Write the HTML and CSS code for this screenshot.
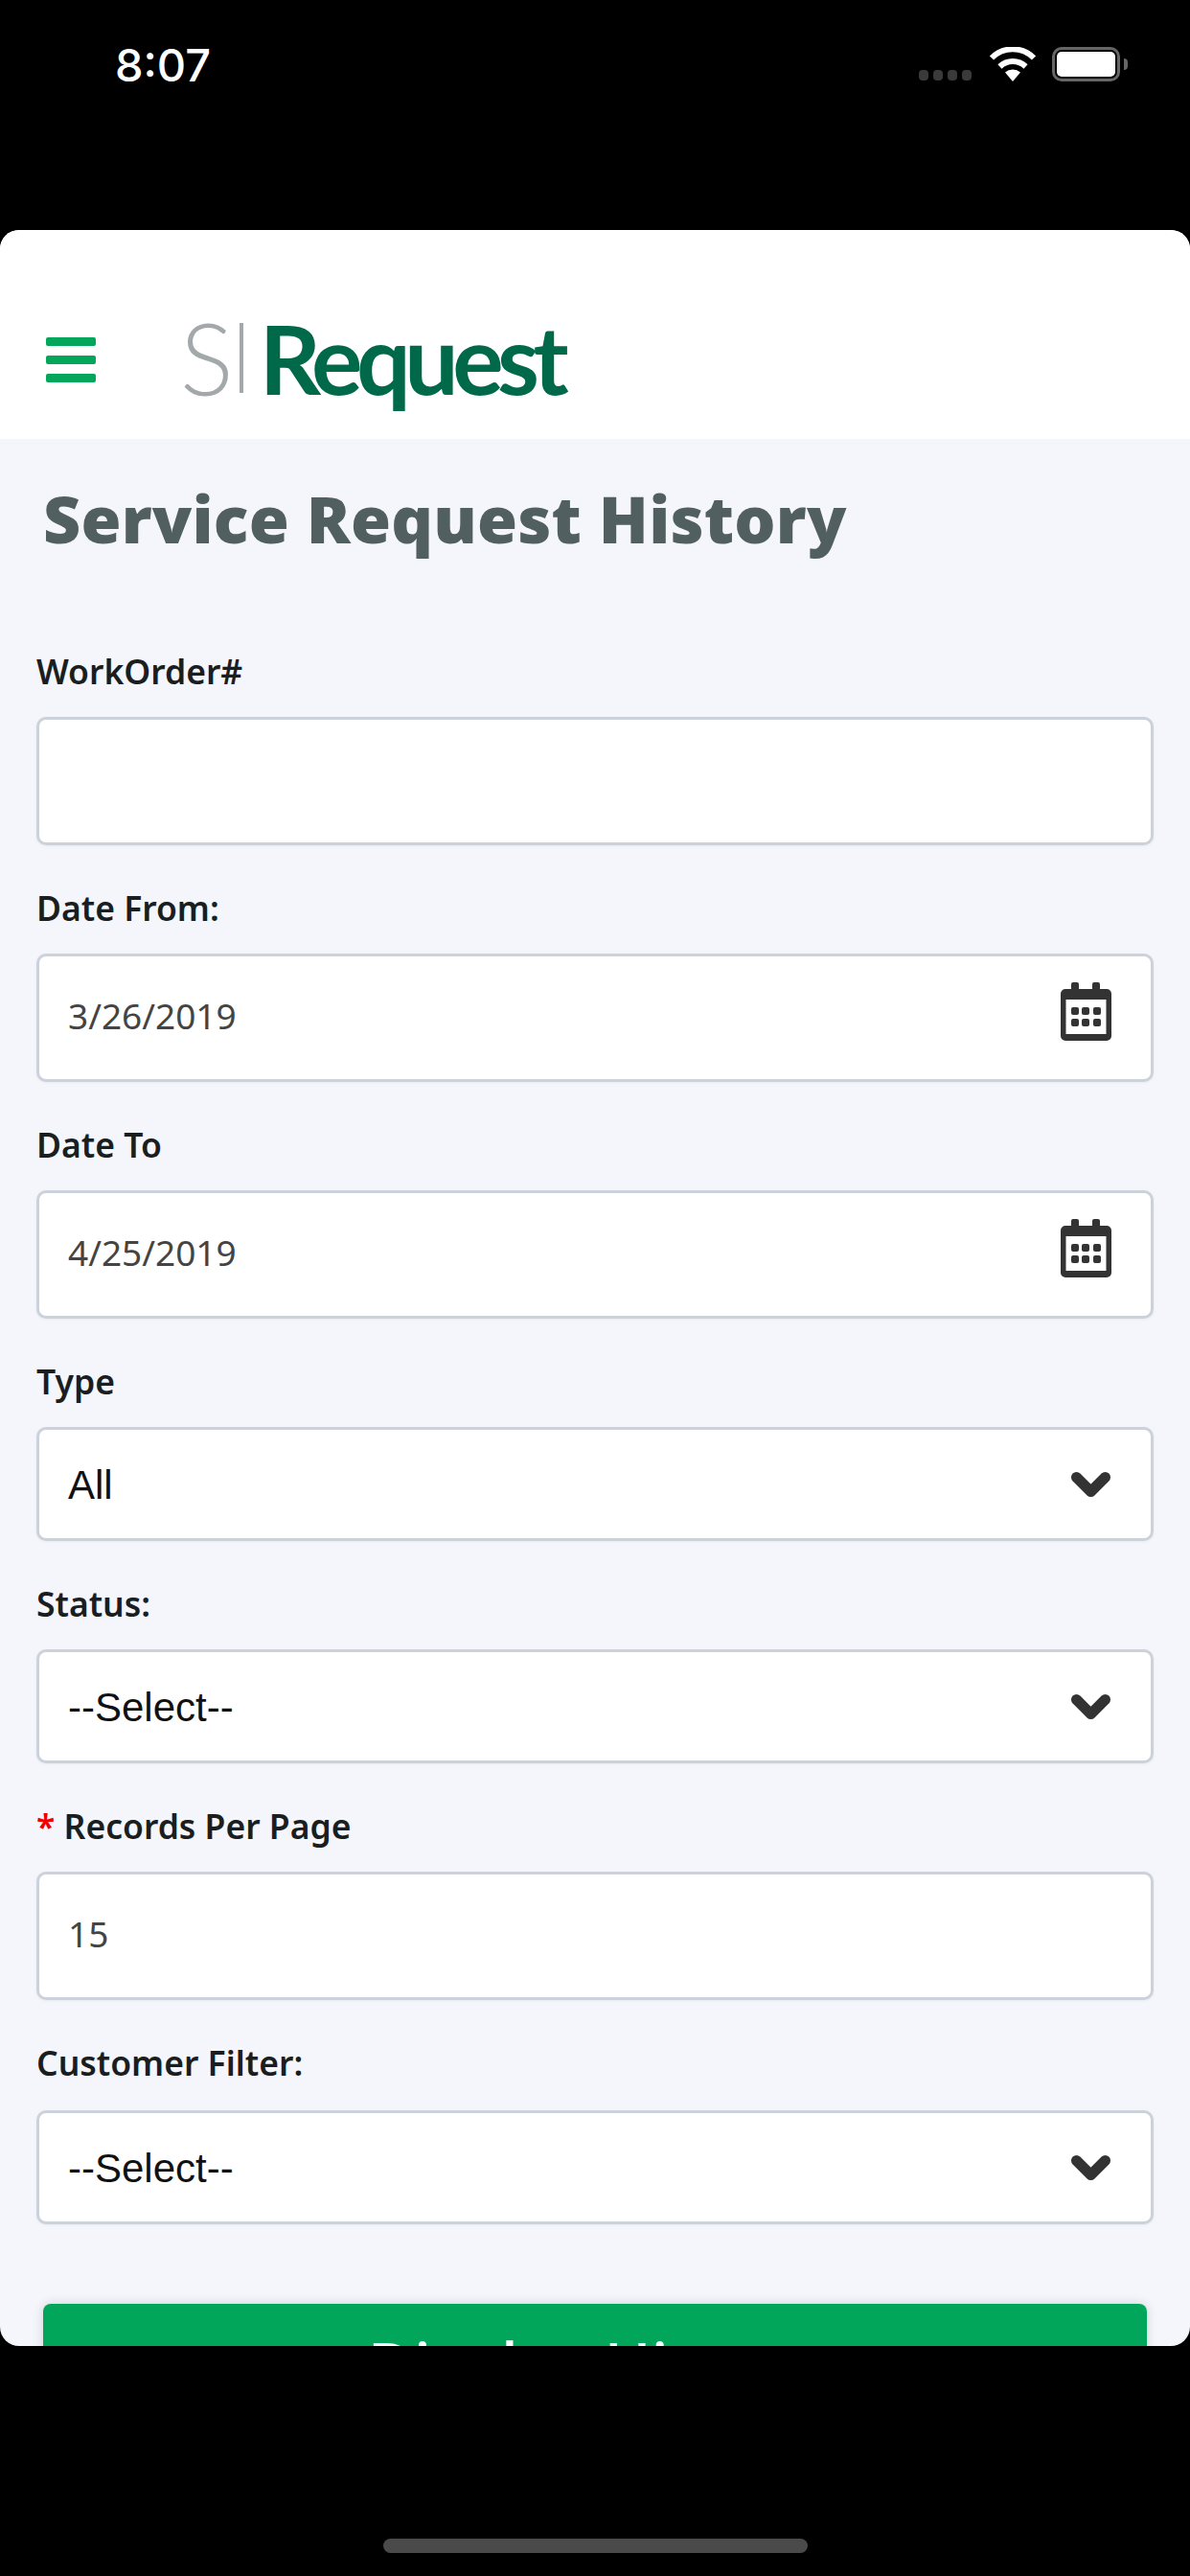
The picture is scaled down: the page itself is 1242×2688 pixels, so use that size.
FILE: index.html
```html
<!DOCTYPE html>
<html lang="en">
<head>
    <meta charset="UTF-8">
    <meta name="viewport" content="width=device-width, initial-scale=1.0">
    <title>Service Request History</title>
    <link rel="stylesheet" href="styles.css">
</head>
<body>
    <!-- Status bar -->
    <div class="status-bar">
        <span class="time">8:07</span>
        <div class="status-icons">
            <div class="signal"><i></i><i></i><i></i><i></i></div>
            <svg class="wifi" width="50" height="36" viewBox="0 0 50 36">
                <path d="M25 36 L17 26.5 A12 12 0 0 1 33 26.5 Z" fill="#fff"/>
                <path d="M11.5 20.5 A19.5 19.5 0 0 1 38.5 20.5" fill="none" stroke="#fff" stroke-width="6"/>
                <path d="M3 11.5 A31 31 0 0 1 47 11.5" fill="none" stroke="#fff" stroke-width="6"/>
            </svg>
            <div class="battery"><div class="battery-fill"></div></div>
            <div class="battery-nub"></div>
        </div>
    </div>

    <div class="webview">
        <div class="top-bar">
            <div class="hamburger"><i></i><i></i><i></i></div>
            <div class="logo"><span class="logo-si">S</span><span class="logo-bar"></span><span class="logo-name">Request</span></div>
        </div>

        <div class="content">
            <h1 class="page-title">Service Request History</h1>

            <div class="field">
                <label>WorkOrder#</label>
                <div class="box"></div>
            </div>
            <div class="field">
                <label>Date From:</label>
                <div class="box"><span class="value">3/26/2019</span>
                    <svg class="cal" width="53" height="61" viewBox="0 0 53 61"><use href="#calendar"/></svg>
                </div>
            </div>
            <div class="field">
                <label>Date To</label>
                <div class="box"><span class="value">4/25/2019</span>
                    <svg class="cal" width="53" height="61" viewBox="0 0 53 61"><use href="#calendar"/></svg>
                </div>
            </div>
            <div class="field">
                <label>Type</label>
                <div class="box select"><span class="option">All</span>
                    <svg class="chev" width="43" height="29" viewBox="0 0 43 29"><use href="#chevron"/></svg>
                </div>
            </div>
            <div class="field">
                <label>Status:</label>
                <div class="box select"><span class="option">--Select--</span>
                    <svg class="chev" width="43" height="29" viewBox="0 0 43 29"><use href="#chevron"/></svg>
                </div>
            </div>
            <div class="field">
                <label><span class="req">*</span> Records Per Page</label>
                <div class="box"><span class="value">15</span></div>
            </div>
            <div class="field field-last">
                <label>Customer Filter:</label>
                <div class="box select"><span class="option">--Select--</span>
                    <svg class="chev" width="43" height="29" viewBox="0 0 43 29"><use href="#chevron"/></svg>
                </div>
            </div>

            <button class="submit">Display History</button>
        </div>
    </div>

    <div class="bottom-bar"><div class="home-indicator"></div></div>

    <!-- shared icons -->
    <svg class="defs" width="0" height="0">
        <defs>
            <g id="calendar" fill="#333">
                <rect x="11" y="0" width="8" height="12" rx="2"/>
                <rect x="33" y="0" width="8" height="12" rx="2"/>
                <path fill-rule="evenodd" d="M5 7 H48 A5 5 0 0 1 53 12 V56 A5 5 0 0 1 48 61 H5 A5 5 0 0 1 0 56 V12 A5 5 0 0 1 5 7 Z M5.5 18 V54 H47.5 V18 Z"/>
                <rect x="11" y="26" width="8" height="8" rx="2"/>
                <rect x="22" y="26" width="8" height="8" rx="2"/>
                <rect x="34" y="26" width="8" height="8" rx="2"/>
                <rect x="11" y="38" width="8" height="8" rx="2"/>
                <rect x="22" y="38" width="8" height="8" rx="2"/>
                <rect x="34" y="38" width="8" height="8" rx="2"/>
            </g>
            <path id="chevron" d="M6.5 6.5 L21.5 21.5 L36.5 6.5" fill="none" stroke="#333" stroke-width="11" stroke-linecap="round" stroke-linejoin="round"/>
        </defs>
    </svg>
</body>
</html>
```

FILE: styles.css
```css
* {
    box-sizing: border-box;
}
html, body {
    margin: 0;
    background-color: #000;
}
body {
    width: 1242px;
    height: 2688px;
    overflow: hidden;
    font-family: "Noto Sans", "Open Sans", sans-serif;
}
.defs {
    display: block;
}

/* status bar */
.status-bar {
    height: 240px;
    display: flex;
    justify-content: space-between;
    align-items: flex-start;
    padding: 40px 65px 0 120px;
    color: #fff;
}
.time {
    font-family: Inter, sans-serif;
    font-size: 47px;
    font-weight: 500;
    line-height: 56px;
}
.status-icons {
    display: flex;
    align-items: flex-end;
    margin-top: 9px;
}
.signal {
    display: flex;
    gap: 5px;
    margin-right: 18px;
    margin-bottom: 1px;
}
.signal i {
    width: 10px;
    height: 11px;
    border-radius: 4px;
    background-color: #3a3a3a;
}
.wifi {
    margin-right: 16px;
}
.battery {
    width: 71px;
    height: 36px;
    padding: 2px;
    border: 3px solid #666;
    border-radius: 10px;
}
.battery-fill {
    height: 100%;
    background-color: #fff;
    border-radius: 5px;
}
.battery-nub {
    width: 4px;
    height: 12px;
    margin: 0 0 12px 4px;
    background-color: #666;
    border-radius: 0 7px 7px 0;
}

/* web view */
.webview {
    height: 2208px;
    overflow: hidden;
    border-radius: 20px;
    background-color: #f4f6fb;
}
.top-bar {
    height: 218px;
    display: flex;
    align-items: flex-start;
    background-color: #fff;
}
.hamburger {
    display: flex;
    flex-direction: column;
    gap: 10px;
    width: 52px;
    margin: 112px 0 0 48px;
}
.hamburger i {
    height: 9px;
    border-radius: 2px;
    background-color: #03a65a;
}
.logo {
    display: flex;
    align-items: flex-start;
    margin: 71px 0 0 88px;
    filter: blur(0.6px);
}
.logo-si {
    font-family: Lato, sans-serif;
    font-weight: 300;
    font-size: 104px;
    line-height: 124px;
    color: #a3a9ab;
}
.logo-bar {
    width: 4px;
    height: 73px;
    margin: 26px 0 0 6px;
    background-color: #a3a9ab;
}
.logo-name {
    margin-left: 17px;
    font-family: Lato, sans-serif;
    font-weight: 700;
    font-size: 100px;
    line-height: 124px;
    letter-spacing: -6.5px;
    color: #00694a;
}

/* form */
.content {
    padding: 0 38px;
}
.page-title {
    margin: 0;
    height: 177px;
    padding: 43px 0 0 7px;
    font-family: "Open Sans", sans-serif;
    font-size: 68px;
    line-height: 80px;
    font-weight: 800;
    letter-spacing: 0.2px;
    white-space: nowrap;
    color: #515f61;
}
.field label {
    display: block;
    height: 113px;
    padding-top: 41px;
    font-size: 35.5px;
    line-height: 48px;
    font-weight: 600;
    color: #1a1e1f;
}
.field-last label {
    height: 115px;
}
.req {
    color: #f00000;
}
.box {
    height: 134px;
    display: flex;
    align-items: center;
    justify-content: space-between;
    padding: 0 41px 0 30px;
    background-color: #fff;
    border: 3px solid #cbd2db;
    border-radius: 10px;
    box-shadow: 0 1px 3px rgba(0, 0, 0, 0.05);
}
.box.select {
    height: 119px;
}
.value {
    margin-bottom: 6px;
    font-size: 37px;
    color: #444;
}
.cal {
    margin-bottom: 13px;
}
.option {
    padding-top: 2px;
    font-family: "Liberation Sans", Arial, sans-serif;
    font-size: 42px;
    color: #111;
}
.chev {
    margin-top: 2px;
}
.submit {
    display: block;
    width: 1152px;
    height: 124px;
    margin: 83px 0 0 7px;
    padding: 0;
    border: none;
    border-radius: 8px;
    background-color: #02a65b;
    box-shadow: 0 0 12px rgba(0, 0, 0, 0.15);
    color: #fff;
    font-family: "Noto Sans", sans-serif;
    font-size: 66px;
    font-weight: 500;
}

/* home indicator */
.bottom-bar {
    height: 240px;
    padding-top: 201px;
}
.home-indicator {
    width: 443px;
    height: 15px;
    margin: 0 auto;
    border-radius: 8px;
    background-color: #4a4a4a;
}
```
